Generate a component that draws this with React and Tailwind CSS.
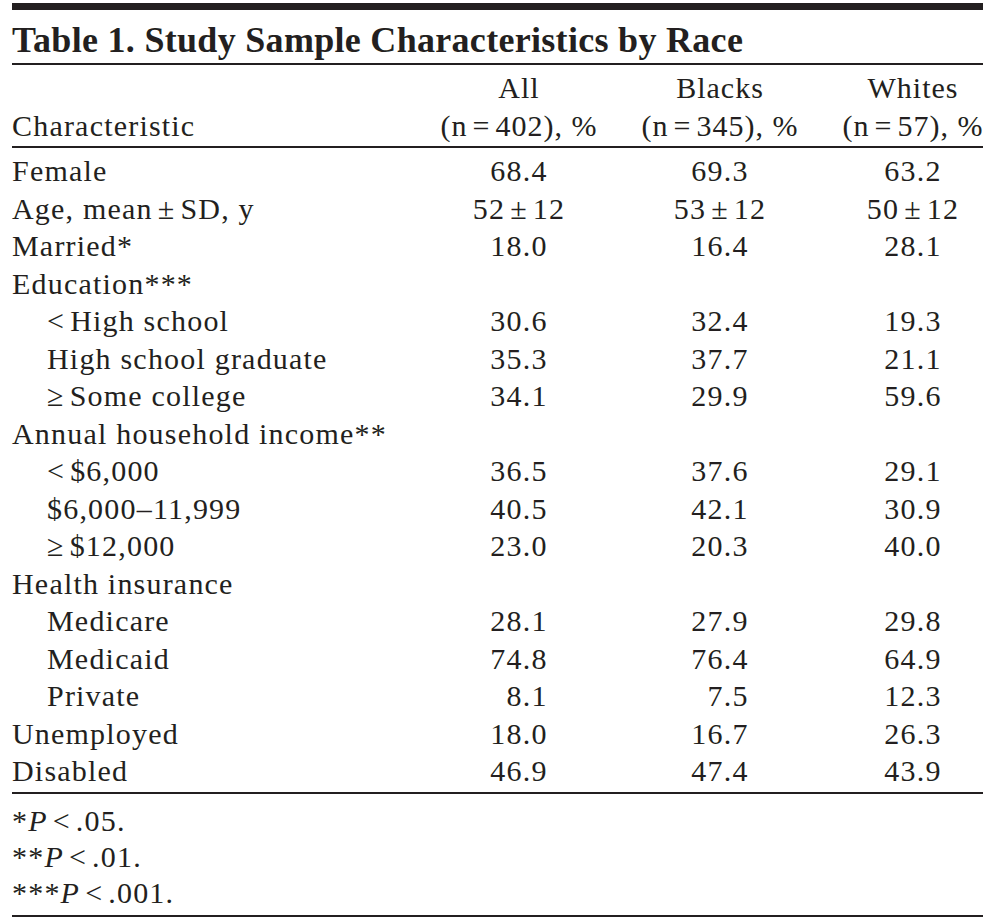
import React from "react";

// narrow gap used around =, ±, < and ≥ (like a thin space)
const S = () => <span className="inline-block w-[5px]" />;

const rows = [
  { label: "Female", vals: ["68.4", "69.3", "63.2"] },
  { label: <>Age, mean<S />±<S />SD, y</>, key: "age", vals: [<>52<S />±<S />12</>, <>53<S />±<S />12</>, <>50<S />±<S />12</>] },
  { label: "Married*", vals: ["18.0", "16.4", "28.1"] },
  { label: "Education***", vals: [] },
  { label: <>&lt;<S />High school</>, key: "lths", vals: ["30.6", "32.4", "19.3"], sub: true },
  { label: "High school graduate", vals: ["35.3", "37.7", "21.1"], sub: true },
  { label: <>≥<S />Some college</>, key: "col", vals: ["34.1", "29.9", "59.6"], sub: true },
  { label: "Annual household income**", vals: [] },
  { label: <>&lt;<S />$6,000</>, key: "inc1", vals: ["36.5", "37.6", "29.1"], sub: true },
  { label: "$6,000–11,999", vals: ["40.5", "42.1", "30.9"], sub: true },
  { label: <>≥<S />$12,000</>, key: "inc3", vals: ["23.0", "20.3", "40.0"], sub: true },
  { label: "Health insurance", vals: [] },
  { label: "Medicare", vals: ["28.1", "27.9", "29.8"], sub: true },
  { label: "Medicaid", vals: ["74.8", "76.4", "64.9"], sub: true },
  { label: "Private", vals: ["8.1", "7.5", "12.3"], sub: true },
  { label: "Unemployed", vals: ["18.0", "16.7", "26.3"] },
  { label: "Disabled", vals: ["46.9", "47.4", "43.9"] },
];

const notes = [
  ["*", ".05."],
  ["**", ".01."],
  ["***", ".001."],
];

// short values (e.g. 8.1) get an invisible digit so the decimals line up
const Val = ({ v }) => (
  <div className="flex justify-center whitespace-nowrap">
    <span>
      {typeof v === "string" && v.length === 3 && <span className="invisible">0</span>}
      {v}
    </span>
  </div>
);

const Head = ({ name, n }) => (
  <div className="flex flex-col items-center whitespace-nowrap">
    <div>{name}</div>
    <div>
      (n<S />=<S />{n}), %
    </div>
  </div>
);

export default function App() {
  return (
    <div className="min-h-screen bg-white px-[12px] text-[#231f20] font-['Liberation_Serif','Times_New_Roman',serif]">
      <div className="pt-[3px]">
        <div className="h-[7px] bg-[#231f20]" />
      </div>

      <div className="pt-[10px] pb-[3px] border-b-2 border-[#231f20] text-[36px] leading-[40px] font-bold tracking-[0.3px]">
        Table 1. Study Sample Characteristics by Race
      </div>

      <div className="grid grid-cols-[429px_156px_246px_140px] pt-[4px] pb-[2px] border-b-2 border-[#231f20] text-[30px] leading-[37.5px] tracking-[1px]">
        <div className="flex items-end tracking-[1.2px]">Characteristic</div>
        <Head name="All" n="402" />
        <Head name="Blacks" n="345" />
        <Head name="Whites" n="57" />
      </div>

      <div className="pt-[4px] pb-[2px] border-b-2 border-[#231f20] text-[30px] leading-[37.5px] tracking-[1.2px]">
        {rows.map((r) => (
          <div key={r.key || r.label} className="grid grid-cols-[429px_156px_246px_140px]">
            <div className={r.sub ? "pl-[35px] whitespace-nowrap" : "whitespace-nowrap"}>{r.label}</div>
            <Val v={r.vals[0]} />
            <Val v={r.vals[1]} />
            <Val v={r.vals[2]} />
          </div>
        ))}
      </div>

      <div className="pt-[9px] pb-[4px] border-b-2 border-[#231f20] text-[30px] leading-[36px] tracking-[1.2px]">
        {notes.map(([stars, p]) => (
          <div key={stars}>
            {stars}
            <i>P</i>
            <S />&lt;<S />
            {p}
          </div>
        ))}
      </div>
    </div>
  );
}
